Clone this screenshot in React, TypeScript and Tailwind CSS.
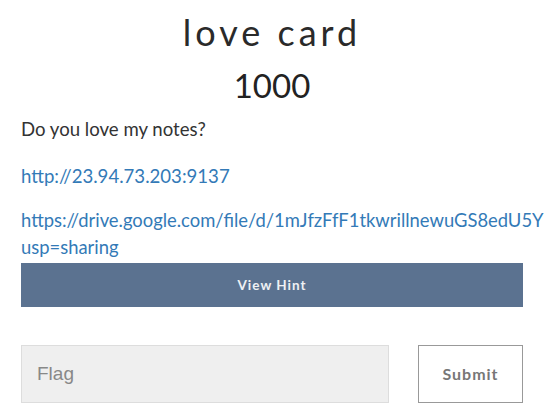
import React from "react";

export default function App() {
  return (
    <div className="w-[551px] h-[418px] overflow-hidden bg-white font-['Lato',sans-serif] text-[#333]">
      <div className="px-[21px] w-[544px]">
        {/* Challenge header */}
        <h3 className="mt-[8px] text-center text-[36px] leading-[48px] tracking-[4px] text-[#2a2a2a]">love card</h3>
        <h4 className="mt-[9px] text-center text-[33px] leading-[40px] text-[#222]">1000</h4>

        {/* Description */}
        <p className="mt-[12px] text-[18.6px] leading-[24px]">Do you love my notes?</p>
        <p className="mt-[23px] text-[18.6px] leading-[24px]">
          <a href="#" className="text-[#337ab7]">http://23.94.73.203:9137</a>
        </p>
        <p className="mt-[19px] text-[18.4px] leading-[27px] whitespace-nowrap">
          <a href="#" className="text-[#337ab7]">
            https://drive.google.com/file/d/1mJfzFfF1tkwrillnewuGS8edU5Y
            <br />
            usp=sharing
          </a>
        </p>

        {/* Hint */}
        <button className="mt-[2px] w-[502px] h-[44px] bg-[#5b7290] text-white/90 text-[13.5px] font-bold tracking-[1px] flex items-center justify-center">
          View Hint
        </button>

        {/* Flag form */}
        <div className="mt-[38px] flex items-center">
          <input
            placeholder="Flag"
            className="w-[368px] h-[58px] bg-[#efefef] border border-[#ddd] px-[15px] text-[19px] font-['Liberation_Sans',sans-serif] placeholder:text-[#888] outline-none"
          />
          <button className="ml-[29px] w-[105px] h-[58px] border border-[#999] bg-white text-[#777] text-[16px] font-bold tracking-[1px]">
            Submit
          </button>
        </div>
      </div>
    </div>
  );
}
